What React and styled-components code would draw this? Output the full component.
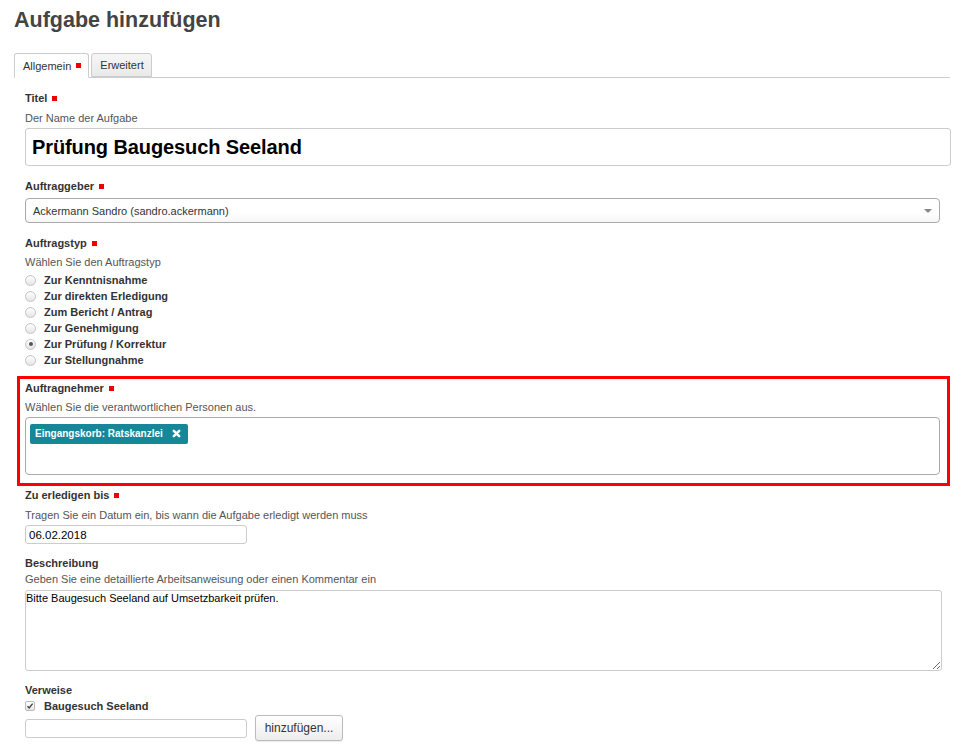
import React from 'react';
import styled, { createGlobalStyle } from 'styled-components';

const GlobalStyle = createGlobalStyle`
  body {
    margin: 0;
    background: #fff;
    font-family: 'Liberation Sans', Arial, Helvetica, sans-serif;
    color: #333;
  }
`;

const Page = styled.div`
  width: 965px;
  height: 749px;
  overflow: hidden;
  padding: 5px 0 0 14px;
  box-sizing: border-box;
`;

const Heading = styled.h1`
  margin: 0;
  font-size: 21.5px;
  line-height: 30px;
  font-weight: 700;
  color: #444;
`;

const TabBar = styled.div`
  display: flex;
  gap: 2px;
  margin-top: 18px;
  width: 936px;
  border-bottom: 1px solid #ccc;
  height: 24px;
`;

const Tab = styled.div`
  display: flex;
  align-items: center;
  height: ${p => (p.$active ? '25px' : '24px')};
  box-sizing: border-box;
  padding: 0 7px 0 8px;
  margin-bottom: -1px;
  font-size: 11px;
  color: #333;
  border: 1px solid #ccc;
  border-radius: 3px 3px 0 0;
  background: ${p => (p.$active ? '#fff' : 'linear-gradient(#f6f6f6, #e9e9e9)')};
  border-bottom-color: ${p => (p.$active ? '#fff' : '#ccc')};
`;

const Required = styled.span`
  display: inline-block;
  width: 5px;
  height: 5px;
  background: #e00;
  margin-left: 5px;
  vertical-align: 1px;
`;

const Form = styled.div`
  display: flex;
  flex-direction: column;
  padding-left: 11px;
`;

const Field = styled.div`
  display: flex;
  flex-direction: column;
  align-items: flex-start;
  margin-top: ${p => p.$top || 13}px;
`;

const Label = styled.div`
  font-size: 11px;
  font-weight: 700;
  line-height: 14px;
  color: #333;
`;

const Hint = styled.div`
  font-size: 11px;
  line-height: 14px;
  color: #555;
  margin-top: ${p => p.$top || 5}px;
`;

const TitleInput = styled.div`
  margin-top: 3px;
  width: 926px;
  height: 38px;
  box-sizing: border-box;
  border: 1px solid #ccc;
  border-radius: 3px;
  padding: 0 6px;
  display: flex;
  align-items: center;
  font-size: 20px;
  font-weight: 700;
  color: #000;
  letter-spacing: -0.1px;
`;

const Select = styled.div`
  margin-top: 5px;
  width: 915px;
  height: 25px;
  box-sizing: border-box;
  border: 1px solid #aaa;
  border-radius: 4px;
  background: linear-gradient(#fff 60%, #f6f6f6);
  display: flex;
  align-items: center;
  justify-content: space-between;
  padding: 0 7px;
  font-size: 11px;
  color: #333;
`;

const Caret = styled.span`
  width: 0;
  height: 0;
  border-left: 4px solid transparent;
  border-right: 4px solid transparent;
  border-top: 4px solid #888;
`;

const RadioList = styled.div`
  display: flex;
  flex-direction: column;
  margin-top: 3px;
`;

const Option = styled.div`
  display: flex;
  align-items: center;
  gap: 8px;
  height: 16px;
  font-size: 11px;
  font-weight: 700;
  color: #333;
`;

const Radio = styled.span`
  width: 11px;
  height: 11px;
  box-sizing: border-box;
  border-radius: 50%;
  border: 1px solid #c4c4c4;
  background: linear-gradient(#fff, #e4e4e4);
  display: flex;
  align-items: center;
  justify-content: center;
  &::after {
    content: '';
    width: 4px;
    height: 4px;
    border-radius: 50%;
    background: ${p => (p.$checked ? '#555' : 'transparent')};
  }
`;

const Highlight = styled.div`
  margin: 8px 0 0 -8px;
  width: 933px;
  box-sizing: border-box;
  border: 3px solid #f00;
  padding: 2px 0 8px 5px;
  display: flex;
  flex-direction: column;
  align-items: flex-start;
`;

const TagBox = styled.div`
  margin-top: 3px;
  width: 915px;
  height: 58px;
  box-sizing: border-box;
  border: 1px solid #aaa;
  border-radius: 4px;
  padding: 5px 4px;
`;

const Tag = styled.span`
  display: inline-flex;
  align-items: center;
  gap: 9px;
  height: 20px;
  padding: 0 7px 0 5px;
  background: #158799;
  border-radius: 2px;
  color: #fff;
  font-size: 10px;
  font-weight: 700;
`;

const TextInput = styled.div`
  margin-top: ${p => p.$top ?? 3}px;
  width: 222px;
  height: 19px;
  box-sizing: border-box;
  border: 1px solid #ccc;
  border-radius: 3px;
  padding: 0 3px;
  display: flex;
  align-items: center;
  font-size: 11.5px;
  color: #000;
`;

const TextArea = styled.textarea`
  margin: 4px 0 0;
  width: 917px;
  height: 81px;
  box-sizing: border-box;
  border: 1px solid #ccc;
  border-radius: 3px;
  padding: 1px 0 0 0;
  font-family: 'Liberation Sans', Arial, sans-serif;
  font-size: 11px;
  color: #000;
  resize: both;
  outline: none;
`;

const CheckRow = styled.div`
  display: flex;
  align-items: center;
  gap: 9px;
  height: 16px;
  margin-top: 1px;
  font-size: 11px;
  font-weight: 700;
  color: #333;
`;

const Check = styled.span`
  width: 10px;
  height: 10px;
  box-sizing: border-box;
  border: 1px solid #bbb;
  border-radius: 2px;
  background: linear-gradient(#fff, #e6e6e6);
  display: flex;
  align-items: center;
  justify-content: center;
`;

const AddRow = styled.div`
  display: flex;
  align-items: center;
  gap: 8px;
  margin-top: 1px;
`;

const Button = styled.div`
  width: 88px;
  height: 26px;
  box-sizing: border-box;
  border: 1px solid #bbb;
  border-radius: 3px;
  background: linear-gradient(#fff, #ededed);
  box-shadow: 0 1px 1px rgba(0, 0, 0, 0.08);
  display: flex;
  align-items: center;
  justify-content: center;
  font-size: 12px;
  color: #333;
`;

const options = [
  'Zur Kenntnisnahme',
  'Zur direkten Erledigung',
  'Zum Bericht / Antrag',
  'Zur Genehmigung',
  'Zur Prüfung / Korrektur',
  'Zur Stellungnahme',
];

export default function App() {
  return (
    <Page>
      <GlobalStyle />
      <Heading>Aufgabe hinzufügen</Heading>
      <TabBar>
        <Tab $active>Allgemein<Required /></Tab>
        <Tab>Erweitert</Tab>
      </TabBar>
      <Form>
        <Field $top={13}>
          <Label>Titel<Required /></Label>
          <Hint $top={6}>Der Name der Aufgabe</Hint>
          <TitleInput>Prüfung Baugesuch Seeland</TitleInput>
        </Field>
        <Field>
          <Label>Auftraggeber<Required /></Label>
          <Select>
            Ackermann Sandro (sandro.ackermann)
            <Caret />
          </Select>
        </Field>
        <Field>
          <Label>Auftragstyp<Required /></Label>
          <Hint>Wählen Sie den Auftragstyp</Hint>
          <RadioList>
            {options.map(o => (
              <Option key={o}>
                <Radio $checked={o === 'Zur Prüfung / Korrektur'} />
                {o}
              </Option>
            ))}
          </RadioList>
        </Field>
        <Highlight>
          <Label>Auftragnehmer<Required /></Label>
          <Hint>Wählen Sie die verantwortlichen Personen aus.</Hint>
          <TagBox>
            <Tag>
              Eingangskorb: Ratskanzlei
              <svg width="9" height="9" viewBox="0 0 10 10">
                <path d="M2 2L8 8M8 2L2 8" stroke="#fff" strokeWidth="2.8" strokeLinecap="round" />
              </svg>
            </Tag>
          </TagBox>
        </Highlight>
        <Field $top={2}>
          <Label>Zu erledigen bis<Required /></Label>
          <Hint $top={6}>Tragen Sie ein Datum ein, bis wann die Aufgabe erledigt werden muss</Hint>
          <TextInput>06.02.2018</TextInput>
        </Field>
        <Field $top={12}>
          <Label>Beschreibung</Label>
          <Hint $top={2}>Geben Sie eine detaillierte Arbeitsanweisung oder einen Kommentar ein</Hint>
          <TextArea defaultValue="Bitte Baugesuch Seeland auf Umsetzbarkeit prüfen." />
        </Field>
        <Field $top={12}>
          <Label>Verweise</Label>
          <CheckRow>
            <Check>
              <svg width="8" height="8" viewBox="0 0 8 8">
                <path d="M1.5 4.2L3.2 6L6.6 1.6" stroke="#444" strokeWidth="1.4" fill="none" />
              </svg>
            </Check>
            Baugesuch Seeland
          </CheckRow>
          <AddRow>
            <TextInput $top={0} />
            <Button>hinzufügen...</Button>
          </AddRow>
        </Field>
      </Form>
    </Page>
  );
}
